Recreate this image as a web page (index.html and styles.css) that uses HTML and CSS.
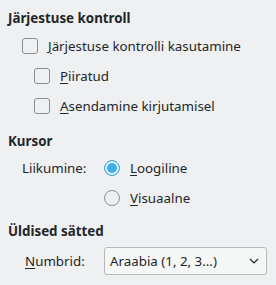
FILE: index.html
```html
<!DOCTYPE html>
<html>
<head>
<meta charset="utf-8">
<link rel="stylesheet" href="styles.css">
</head>
<body>
<div class="page">
  <div class="heading h1">Järjestuse kontroll</div>
  <div class="row check lvl1"><span class="box"></span><span><u>J</u>ärjestuse kontrolli kasutamine</span></div>
  <div class="row check lvl2 r2"><span class="box"></span><span><u>P</u>iiratud</span></div>
  <div class="row check lvl2 r3"><span class="box"></span><span><u>A</u>sendamine kirjutamisel</span></div>

  <div class="heading h2">Kursor</div>
  <div class="form">
    <span class="label">Liikumine:</span>
    <div class="row radio"><span class="dot on"></span><span><u>L</u>oogiline</span></div>
    <span></span>
    <div class="row radio r5"><span class="dot"></span><span><u>V</u>isuaalne</span></div>
  </div>

  <div class="heading h3">Üldised sätted</div>
  <div class="form2">
    <span class="label"><u>N</u>umbrid:</span>
    <div class="combo"><span>Araabia (1, 2, 3...)</span>
      <svg width="10" height="6" viewBox="0 0 10 6"><path d="M1 1 L5 5 L9 1" fill="none" stroke="#232629" stroke-width="1.2"/></svg>
    </div>
  </div>
</div>
</body>
</html>
```

FILE: styles.css
```css
html, body { margin: 0; padding: 0; }
body {
  background: #eff0f1;
  color: #232629;
  font-family: "Noto Sans", sans-serif;
  font-size: 13.33px;
  width: 276px;
  height: 285px;
  overflow: hidden;
}
.page { padding: 8px 0 0 8px; }
u { text-decoration: underline; text-underline-offset: 2px; }
.heading { font-weight: bold; line-height: 18px; }
.h1 { margin-top: 1px; }
.row { display: flex; align-items: center; line-height: 18px; }
.check .box {
  width: 14px; height: 14px;
  border: 1px solid #8c8e90;
  border-radius: 3px;
  background: #eff0f1;
  margin-right: 10px;
  flex: none;
}
.lvl1 { margin-left: 14px; margin-top: 10px; }
.lvl2 { margin-left: 26px; }
.r2 { margin-top: 12px; }
.r3 { margin-top: 12px; }
.h2 { margin-top: 17px; }
.form {
  display: grid;
  grid-template-columns: 82px auto;
  margin-left: 14px;
  margin-top: 9px;
  align-items: center;
}
.radio .dot {
  width: 14px; height: 14px;
  border: 1px solid #8c8e90;
  border-radius: 50%;
  margin-right: 10px;
  flex: none;
  box-sizing: content-box;
}
.radio .dot.on {
  border-color: #3daee9;
  background: #3daee9;
  box-shadow: inset 0 0 0 2px #eff0f1;
}
.r5 { margin-top: 12px; }
.h3 { margin-top: 15px; }
.form2 {
  display: flex;
  align-items: center;
  margin-left: 17px;
  margin-top: 7px;
}
.form2 .label { width: 79px; }
.combo {
  border: 1px solid #b6b8ba;
  border-radius: 3px;
  background: #f6f7f7;
  display: flex;
  align-items: center;
  justify-content: space-between;
  padding: 0 7px 0 5px;
  box-sizing: border-box;
  width: 163px; height: 28px;
}
```
